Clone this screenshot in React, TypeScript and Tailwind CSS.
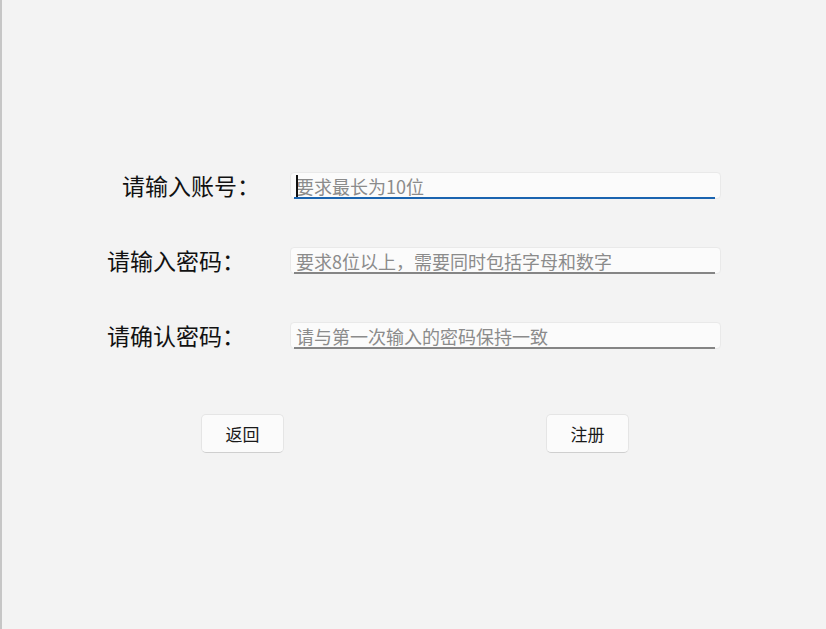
import { useState } from "react";

const font = "font-['Microsoft_YaHei','Noto_Sans_CJK_SC',sans-serif]";

const Field = ({
  label,
  placeholder,
  indent,
  focused,
}: {
  label: string;
  placeholder: string;
  indent: string;
  focused?: boolean;
}) => {
  const [value, setValue] = useState("");

  return (
    <div className="flex h-[27px] items-center">
      <div className={`w-[183px] shrink-0 ${indent} text-[23px] leading-none text-[#111]`}>{label}</div>
      <div className="relative h-[27px] w-[431px] rounded-[4px] border border-[#e9e9e9] bg-[#fbfbfb]">
        <input
          value={value}
          onChange={(e) => setValue(e.target.value)}
          placeholder={placeholder}
          className={`${font} h-full w-full bg-transparent pl-[5px] text-[18px] leading-none text-[#1a1a1a] outline-none placeholder:text-[#8b8b8b]`}
        />
        {focused && value === "" ? (
          <span className="pointer-events-none absolute left-[5px] top-[2px] h-[23px] w-[2px] bg-[#111]" />
        ) : null}
        <span
          className={
            focused
              ? "absolute -bottom-px left-[3px] right-[5px] h-[2px] bg-[#1a64b0]"
              : "absolute -bottom-px left-[3px] right-[5px] h-[2px] bg-[#858585]"
          }
        />
      </div>
    </div>
  );
};

export default function App() {
  return (
    <div className={`${font} flex h-[629px] w-full bg-[#f3f3f3]`}>
      <div className="w-[2px] shrink-0 bg-[#c6c6c6]" />
      <div className="flex flex-1 flex-col pl-[105px] pt-[172px]">
        <div className="flex flex-col gap-[48px]">
          <Field label="请输入账号：" placeholder="要求最长为10位" indent="pl-[15px]" focused />
          <Field label="请输入密码：" placeholder="要求8位以上，需要同时包括字母和数字" indent="" />
          <Field label="请确认密码：" placeholder="请与第一次输入的密码保持一致" indent="" />
        </div>
        <div className="mt-[65px] flex gap-[262px] pl-[94px]">
          <button className="h-[39px] w-[83px] rounded-[5px] border border-[#e5e5e5] border-b-[#cfcfcf] bg-[#fbfbfb] text-[17px] text-[#1a1a1a]">
            返回
          </button>
          <button className="h-[39px] w-[83px] rounded-[5px] border border-[#e5e5e5] border-b-[#cfcfcf] bg-[#fbfbfb] text-[17px] text-[#1a1a1a]">
            注册
          </button>
        </div>
      </div>
    </div>
  );
}
